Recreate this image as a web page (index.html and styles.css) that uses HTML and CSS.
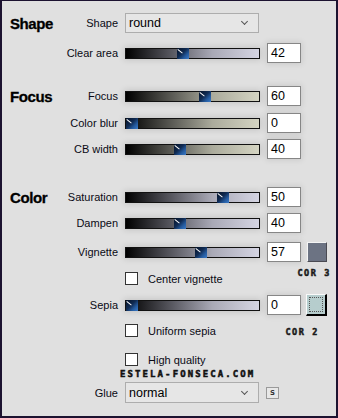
FILE: index.html
```html
<!DOCTYPE html>
<html>
<head>
<meta charset="utf-8">
<link rel="stylesheet" href="styles.css">
</head>
<body>
<div class="panel">
  <div class="row r-shape">
    <div class="lab"><span class="head">Shape</span><span class="name">Shape</span></div>
    <div class="select"><span>round</span><span class="chev"></span></div>
  </div>
  <div class="row r-clear">
    <div class="lab"><span class="name">Clear area</span></div>
    <div class="track lav"><span class="thumb" style="left:51px"></span></div>
    <div class="num">42</div>
  </div>

  <div class="row r-focus">
    <div class="lab"><span class="head">Focus</span><span class="name">Focus</span></div>
    <div class="track beige"><span class="thumb" style="left:73px"></span></div>
    <div class="num">60</div>
  </div>
  <div class="row r-blur">
    <div class="lab"><span class="name">Color blur</span></div>
    <div class="track beige"><span class="thumb" style="left:0px"></span></div>
    <div class="num">0</div>
  </div>
  <div class="row r-cbw">
    <div class="lab"><span class="name">CB width</span></div>
    <div class="track beige"><span class="thumb" style="left:48px"></span></div>
    <div class="num">40</div>
  </div>

  <div class="row r-sat">
    <div class="lab"><span class="head">Color</span><span class="name">Saturation</span></div>
    <div class="track lav"><span class="thumb" style="left:91px"></span></div>
    <div class="num">50</div>
  </div>
  <div class="row r-damp">
    <div class="lab"><span class="name">Dampen</span></div>
    <div class="track lav"><span class="thumb" style="left:48px"></span></div>
    <div class="num">40</div>
  </div>
  <div class="row r-vig">
    <div class="lab"><span class="name">Vignette</span></div>
    <div class="track lav"><span class="thumb" style="left:69px"></span></div>
    <div class="num">57</div>
    <div class="swatch slate"></div>
  </div>
  <div class="row crow r-cv">
    <div class="lab"></div>
    <span class="box"></span><span class="clabel">Center vignette</span>
    <span class="cor cor3">COR 3</span>
  </div>
  <div class="row r-sepia">
    <div class="lab"><span class="name">Sepia</span></div>
    <div class="track lav"><span class="thumb" style="left:0px"></span></div>
    <div class="num">0</div>
    <div class="swatch sepia"><span class="dots"></span></div>
  </div>
  <div class="row crow r-us">
    <div class="lab"></div>
    <span class="box"></span><span class="clabel">Uniform sepia</span>
    <span class="cor cor2">COR 2</span>
  </div>
  <div class="row crow r-hq">
    <div class="lab"></div>
    <span class="box"></span><span class="clabel">High quality</span>
  </div>
  <div class="row r-wm">
    <span class="wm">ESTELA-FONSECA.COM</span>
  </div>
  <div class="row r-glue">
    <div class="lab"><span class="name">Glue</span></div>
    <div class="select"><span>normal</span><span class="chev"></span></div>
    <span class="sbtn">s</span>
  </div>
</div>
</body>
</html>
```
FILE: styles.css
```css
html, body {
  margin: 0;
  padding: 0;
}
body {
  background: #e0e0e0;
  font-family: "Liberation Sans", Arial, sans-serif;
  color: #0a0a14;
}
.panel {
  box-sizing: border-box;
  width: 338px;
  height: 418px;
  border-style: solid;
  border-color: #1c1230;
  border-width: 1px 2px 2px 2px;
  padding: 12px 5px 0 8px;
  background: #e0e0e0;
}
.row {
  display: flex;
  align-items: center;
  height: 20px;
}
.lab {
  width: 108px;
  flex: none;
  display: flex;
  justify-content: space-between;
  align-items: center;
  margin-right: 7px;
}
.head {
  font-weight: bold;
  font-size: 15px;
  letter-spacing: -0.4px;
  color: #000;
  -webkit-text-stroke: 0.3px #000;
}
.name {
  margin-left: auto;
  font-size: 11px;
}
.select {
  box-sizing: border-box;
  width: 134px;
  height: 20px;
  border: 1px solid #adadad;
  background: #e6e6e6;
  display: flex;
  align-items: center;
  justify-content: space-between;
  padding: 0 11px 0 3px;
  font-size: 12.5px;
  color: #000;
}
.chev {
  width: 4px;
  height: 4px;
  border-right: 1px solid #555;
  border-bottom: 1px solid #555;
  transform: rotate(45deg);
  margin-top: -3px;
}
.track {
  box-sizing: border-box;
  width: 135px;
  height: 11px;
  border: 1px solid #111;
  position: relative;
  box-shadow: 0 0 6px 1px rgba(0, 0, 0, 0.13);
}
.track.lav {
  background: linear-gradient(to right, #000 0%, #5a5a62 35%, #a9a9b6 65%, #d5d5e3 100%);
}
.track.beige {
  background: linear-gradient(to right, #000 0%, #5c5c56 35%, #abab9c 65%, #d4d4c2 100%);
}
.thumb {
  position: absolute;
  top: -1px;
  width: 12px;
  height: 11px;
  background: linear-gradient(135deg, #061226 0%, #0f2a52 45%, #245a9e 72%, #3a7ac8 100%);
  overflow: hidden;
}
.thumb::before {
  content: "";
  position: absolute;
  left: 1px;
  top: 1px;
  width: 6px;
  height: 1px;
  background: #fff;
  transform: rotate(38deg);
  transform-origin: 0 0;
}
.num {
  box-sizing: border-box;
  width: 34px;
  height: 20px;
  margin-left: 7px;
  border: 1px solid #868686;
  background: #fff;
  font-size: 12.5px;
  line-height: 18px;
  padding-left: 3px;
  color: #000;
  box-shadow: 0 0 6px 1px rgba(0, 0, 0, 0.1);
}
.swatch {
  box-sizing: border-box;
  flex: none;
}
.swatch.slate {
  width: 20px;
  height: 20px;
  margin-left: 6px;
  background: #6c7383;
  border: 1px solid;
  border-color: #f4f4f4 #4a4a52 #4a4a52 #f4f4f4;
}
.swatch.sepia {
  width: 21px;
  height: 22px;
  margin-left: 5px;
  background: #b6cdcd;
  border-style: solid;
  border-width: 1px 2px 2px 1px;
  border-color: #fafafa #000 #000 #fafafa;
  padding: 2px;
}
.dots {
  display: block;
  box-sizing: border-box;
  width: 100%;
  height: 100%;
  border: 1px dotted #555;
}
.crow {
  height: 13px;
}
.box {
  box-sizing: border-box;
  width: 13px;
  height: 13px;
  border: 1px solid #333;
  background: #fff;
  flex: none;
}
.clabel {
  margin-left: 10px;
  font-size: 11px;
}
.cor {
  margin-left: auto;
  font-family: "DejaVu Sans Mono", monospace;
  font-weight: bold;
  font-size: 8.5px;
  letter-spacing: 1.6px;
  color: #1a1a1a;
  -webkit-text-stroke: 0.5px #1a1a1a;
}
.cor3 {
  margin-right: 0;
  position: relative;
  top: -6px;
}
.cor2 {
  margin-right: 12px;
  position: relative;
  top: 1px;
}
.r-shape { height: 20px; }
.r-clear { margin-top: 10px; }
.r-focus { margin-top: 23px; }
.r-blur { margin-top: 7px; }
.r-cbw { margin-top: 6px; }
.r-sat { margin-top: 28px; }
.r-damp { margin-top: 6px; }
.r-vig { margin-top: 9px; }
.r-cv { margin-top: 10px; }
.r-sepia { margin-top: 10px; }
.r-us { margin-top: 9px; }
.r-hq { margin-top: 16px; }
.r-wm {
  margin-top: 4px;
  height: 8px;
  padding-left: 110px;
}
.wm {
  font-family: "DejaVu Sans Mono", monospace;
  font-weight: bold;
  font-size: 9px;
  line-height: 8px;
  letter-spacing: 2.1px;
  color: #111;
  -webkit-text-stroke: 0.5px #111;
}
.r-glue {
  margin-top: 4px;
  height: 21px;
}
.r-glue .select {
  height: 21px;
}
.sbtn {
  box-sizing: border-box;
  width: 13px;
  height: 12px;
  margin-left: 7px;
  border: 1px solid #9a9a9a;
  background: #e8e8e8;
  font-family: "DejaVu Sans Mono", monospace;
  font-weight: bold;
  font-size: 9px;
  line-height: 9px;
  text-align: center;
  color: #333;
}
```
